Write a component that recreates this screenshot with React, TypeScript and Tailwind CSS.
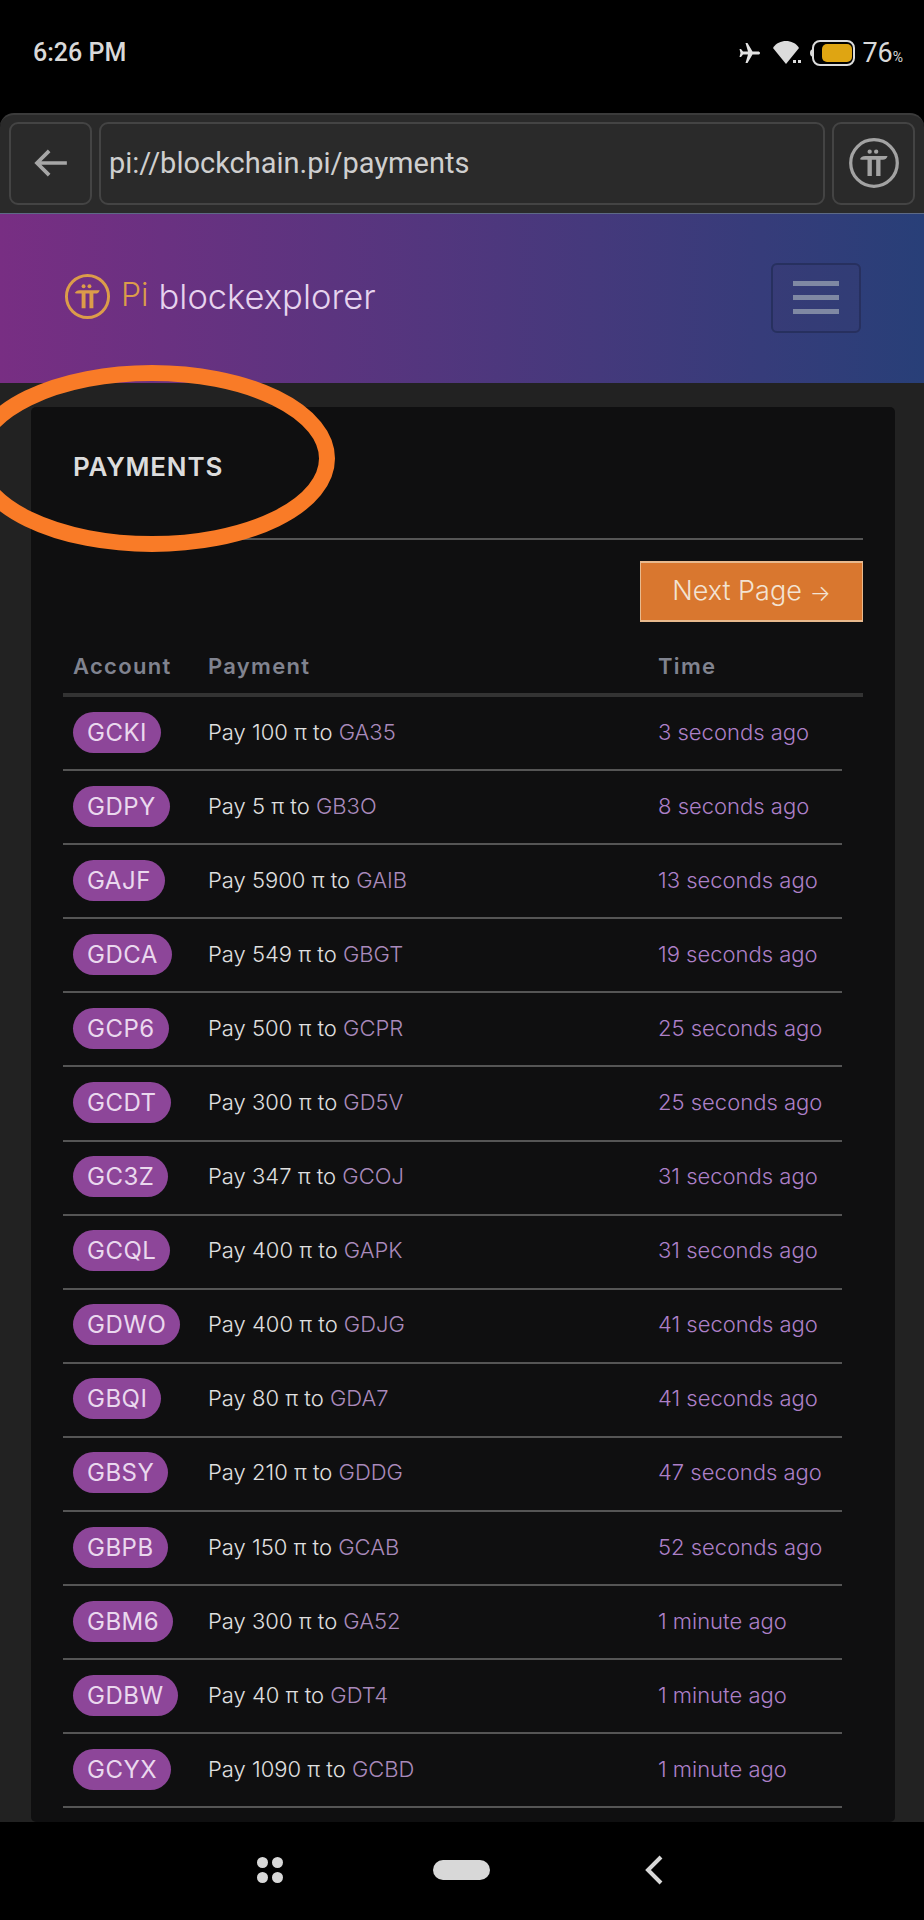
const rows = [
  ["GCKI", "100", "GA35", "3 seconds ago"],
  ["GDPY", "5", "GB3O", "8 seconds ago"],
  ["GAJF", "5900", "GAIB", "13 seconds ago"],
  ["GDCA", "549", "GBGT", "19 seconds ago"],
  ["GCP6", "500", "GCPR", "25 seconds ago"],
  ["GCDT", "300", "GD5V", "25 seconds ago"],
  ["GC3Z", "347", "GCOJ", "31 seconds ago"],
  ["GCQL", "400", "GAPK", "31 seconds ago"],
  ["GDWO", "400", "GDJG", "41 seconds ago"],
  ["GBQI", "80", "GDA7", "41 seconds ago"],
  ["GBSY", "210", "GDDG", "47 seconds ago"],
  ["GBPB", "150", "GCAB", "52 seconds ago"],
  ["GBM6", "300", "GA52", "1 minute ago"],
  ["GDBW", "40", "GDT4", "1 minute ago"],
  ["GCYX", "1090", "GCBD", "1 minute ago"],
];

function PiLogo({ color, size }: { color: string; size: number }) {
  return (
    <svg width={size} height={size} viewBox="0 0 48 48" fill="none">
      <circle cx="24" cy="24" r="21.5" stroke={color} strokeWidth="3" />
      <circle cx="20" cy="13.5" r="2" fill={color} />
      <circle cx="26" cy="13.5" r="2" fill={color} />
      <path d="M11 20.500c1-2 2.500-3 5-3h20.500c-.5 2-2 3.500-4.500 3.500h-2v15h-4V21h-4v15h-4V21h-3c-1.500 0-3 0-4-.5z" fill={color} />
    </svg>
  );
}

export default function App() {
  return (
    <div className="relative flex h-[1920px] w-[924px] flex-col overflow-hidden bg-black font-['Inter',sans-serif]">
      <div className="flex h-[113px] shrink-0 items-start justify-between pl-[33px] pr-[21px] pt-[38px] font-['Roboto',sans-serif] text-[#d9d9d9]">
        <span className="text-[25px] font-medium leading-[30px]">6:26 PM</span>
        <div className="flex items-center">
          <svg width="24" height="24" viewBox="0 0 24 24" fill="#e2e2e2" className="mr-[9px]">
            <path d="M22 12c0-1-1-1.500-2-1.500h-5.500L9.500 2H7.500l2.500 8.500H5L3 8H1.500l1 4-1 4H3l2-2.500h5L7.500 22h2l5-8.500H20c1 0 2-.5 2-1.500z" />
          </svg>
          <svg width="33" height="26" viewBox="0 0 31 26" fill="#dcdcdc" className="mr-[8px]">
            <path d="M1 8C4 3 9 1 14 1s10 2 13 7L14 24z" />
            <rect x="21" y="20" width="3" height="3" />
            <rect x="26" y="20" width="3" height="3" />
          </svg>
          <div className="relative mr-[7px] flex h-[26px] w-[43px] items-center justify-center rounded-[8px] border-2 border-[#dcdcdc]">
            <div className="h-[18px] w-[30px] translate-x-[3px] rounded-[5px] bg-[#dfa512]" />
            <div className="absolute left-[-4px] h-[8px] w-[4px] rounded-l-full border-2 border-[#dcdcdc] bg-black" />
          </div>
          <span className="text-[27px] font-normal leading-[30px]">76</span>
          <span className="mt-[8px] text-[14px] leading-[16px]">%</span>
        </div>
      </div>

      <div className="flex h-[100px] shrink-0 items-center gap-[7px] rounded-t-[14px] border-t-2 border-[#3b3b3b] bg-[#2a2a2a] pl-[9px] pr-[9px] pb-[2px]">
        <div className="flex h-[83px] w-[83px] shrink-0 items-center justify-center rounded-[9px] border-2 border-[#444444]">
          <svg width="36" height="28" viewBox="0 0 38 30" fill="none" stroke="#a6a6a6" strokeWidth="4">
            <path d="M36 15H4M17 2 4 15l13 13" />
          </svg>
        </div>
        <div className="flex h-[83px] flex-1 items-center rounded-[9px] border-2 border-[#444444] pl-[8px] pt-[1px] font-['Roboto',sans-serif] text-[29px] text-[#cfcfcf]">
          pi://blockchain.pi/payments
        </div>
        <div className="flex h-[83px] w-[83px] shrink-0 items-center justify-center rounded-[9px] border-2 border-[#444444]">
          <PiLogo color="#a3a3a3" size={52} />
        </div>
      </div>

      <div className="flex h-[170px] shrink-0 items-center justify-between border-t border-[#5d6a85] bg-[linear-gradient(90deg,#782e83,#283f78)] pl-[64px] pr-[63px]">
        <div className="mb-[4px] flex items-center">
          <PiLogo color="#dc9c4a" size={47} />
          <span className="ml-[10px] mb-[4px] text-[32px] font-light leading-[40px] text-[#dc9c4a]">Pi</span>
          <span className="ml-[10px] text-[34.5px] font-light leading-[40px] text-[#e6d3ee]">blockexplorer</span>
        </div>
        <div className="mb-[2px] flex h-[70px] w-[90px] flex-col items-center justify-center gap-[9px] rounded-[6px] border-2 border-[#27305f] bg-[#3a3a70]/30">
          <div className="h-[5px] w-[46px] bg-[#7f88a3]" />
          <div className="h-[5px] w-[46px] bg-[#7f88a3]" />
          <div className="h-[5px] w-[46px] bg-[#7f88a3]" />
        </div>
      </div>

      <div className="min-h-0 flex-1 overflow-hidden bg-[#222222] pl-[31px] pr-[29px] pt-[24px]">
        <div className="h-[600px] min-h-full rounded-[5px] bg-[#0f0f10] pl-[32px] pr-[32px] pt-[44px]">
          <h1 className="pl-[10px] text-[26px] font-semibold leading-[32px] tracking-[0.8px] text-[#dcdcdc]">PAYMENTS</h1>
          <div className="mt-[55px] h-[2px] bg-[#555555]" />
          <div className="mt-[21px] flex justify-end">
            <div className="flex h-[61px] w-[223px] items-center justify-center gap-[8px] border-y-2 border-x border-[#e8b98d] bg-[#d9772f] text-[27px] font-light text-[#f3e3d3]">
              Next Page <span className="mt-[4px] text-[22px]">→</span>
            </div>
          </div>
          <div className="flex h-[75px] items-center border-b-4 border-[#333333] pl-[10px] pt-[18px] text-[22px] font-semibold tracking-[1.3px] text-[#80838f]">
            <span className="w-[135px]">Account</span>
            <span className="w-[450px]">Payment</span>
            <span>Time</span>
          </div>
          <div className="w-[779px]">
            {rows.map(([acc, amt, to, time]) => (
              <div key={acc} className="flex h-[74.1px] items-center border-b-2 border-[#555555] pb-[2px] pl-[10px] text-[22px] font-light">
                <div className="w-[135px]">
                  <span className="inline-block rounded-full bg-[#8d4699] px-[14px] py-[6px] text-[24px] font-normal leading-[29px] tracking-[0.5px] text-[#ead8ee]">
                    {acc}
                  </span>
                </div>
                <div className="w-[450px] text-[#e0e0e0]">
                  Pay {amt} π to <span className="text-[#a98abb]">{to}</span>
                </div>
                <div className="text-[#ad80c8]">{time}</div>
              </div>
            ))}
          </div>
        </div>
      </div>

      <div className="flex h-[98px] shrink-0 items-center bg-black pb-[2px]">
        <div className="ml-[257px] grid grid-cols-2 gap-x-[4px] gap-y-[4px]">
          <div className="h-[11px] w-[11px] rounded-full bg-[#d8d8d8]" />
          <div className="h-[11px] w-[11px] rounded-full bg-[#d8d8d8]" />
          <div className="h-[11px] w-[11px] rounded-full bg-[#d8d8d8]" />
          <div className="h-[11px] w-[11px] rounded-full bg-[#d8d8d8]" />
        </div>
        <div className="ml-[150px] h-[20px] w-[57px] rounded-[10px] bg-[#d8d8d8]" />
        <svg width="20" height="30" viewBox="0 0 20 30" fill="none" stroke="#d8d8d8" strokeWidth="4" className="ml-[154px]">
          <path d="M17 2 4 15l13 13" />
        </svg>
      </div>

      <svg width="345" height="200" viewBox="0 0 345 200" fill="none" className="absolute left-0 top-[358px]">
        <ellipse cx="152" cy="100.500" rx="175" ry="85.500" stroke="#f97b27" strokeWidth="16" />
      </svg>
    </div>
  );
}
